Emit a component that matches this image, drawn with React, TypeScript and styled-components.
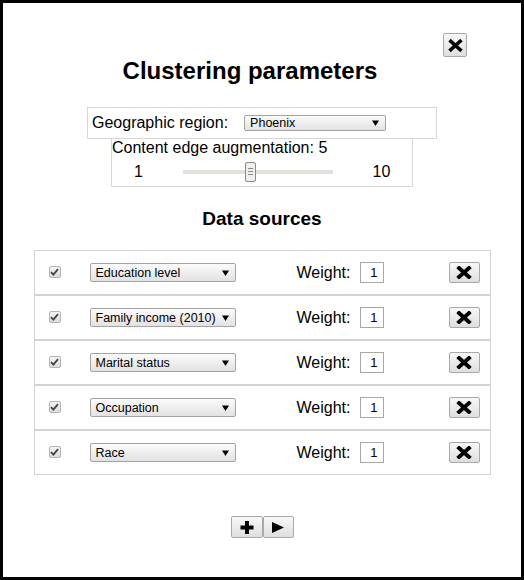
import React from 'react';
import styled, { createGlobalStyle } from 'styled-components';

const Global = createGlobalStyle`
  html, body { margin: 0; padding: 0; background: #fff; }
  body { font-family: "Liberation Sans", Arial, sans-serif; color: #000; }
  * { box-sizing: border-box; }
`;

const Frame = styled.div`
  width: 524px;
  height: 580px;
  border: 3px solid #000;
  background: #fff;
  display: flex;
  flex-direction: column;
  align-items: center;
`;

const TopBar = styled.div`
  align-self: stretch;
  display: flex;
  justify-content: flex-end;
  padding: 30px 54px 0 0;
`;

const IconButton = styled.button<{ $w: number; $h: number }>`
  width: ${(p) => p.$w}px;
  height: ${(p) => p.$h}px;
  padding: 0;
  margin: 0;
  display: flex;
  align-items: center;
  justify-content: center;
  border: 1px solid #a9a9a9;
  border-radius: 2px;
  background: linear-gradient(#f8f8f8, #dedede);
  cursor: pointer;
`;

const Title = styled.h1`
  margin: 0;
  align-self: stretch;
  padding-right: 24px;
  font-size: 24px;
  line-height: 28px;
  font-weight: bold;
  text-align: center;
`;

const RegionBox = styled.div`
  margin-top: 22px;
  width: 350px;
  height: 32px;
  border: 1px solid #d6d6d6;
  display: flex;
  align-items: center;
  padding-left: 4px;
  gap: 16px;
  font-size: 16px;
`;

const SliderBox = styled.div`
  width: 302px;
  height: 49px;
  margin-top: -1px;
  border: 1px solid #d6d6d6;
  display: flex;
  flex-direction: column;
  font-size: 16px;
`;

const SliderCaption = styled.div`
  line-height: 18px;
`;

const SliderRow = styled.div`
  flex: 1;
  display: grid;
  grid-template-columns: 53px 150px 1fr;
  column-gap: 18px;
  align-items: center;
`;

const SliderValue = styled.div`
  text-align: center;
  line-height: 18px;
`;

const Track = styled.div`
  position: relative;
  height: 4px;
  background: #e4e0dc;
  border-radius: 1px;
`;

const Thumb = styled.div`
  position: absolute;
  top: -8px;
  width: 11px;
  height: 20px;
  margin-left: -5px;
  border: 1px solid #8c8c8c;
  border-radius: 2px;
  background: #f1efec;
  display: flex;
  flex-direction: column;
  justify-content: center;
  align-items: center;
  gap: 2px;
`;

const Grip = styled.span`
  width: 5px;
  height: 1px;
  background: #8c8c8c;
`;

const Subtitle = styled.h2`
  margin: 21px 0 0;
  font-size: 19px;
  line-height: 22px;
  font-weight: bold;
  text-align: center;
`;

const Table = styled.div`
  margin-top: 20px;
  width: 457px;
  display: flex;
  flex-direction: column;
`;

const Row = styled.div`
  height: 45px;
  border: 1px solid #d3d3d3;
  display: grid;
  grid-template-columns: 55px 207px 63px 89px 1fr;
  align-items: center;
`;

const CheckCell = styled.div`
  padding-left: 14px;
  display: flex;
  align-items: center;
  margin-top: -2px;
`;

const CheckBox = styled.span`
  width: 12px;
  height: 12px;
  border: 1px solid #b4b4b4;
  border-radius: 2px;
  background: linear-gradient(#f4f4f4, #dcdcdc);
  display: flex;
  align-items: center;
  justify-content: center;
`;

const FakeSelect = styled.div<{ $w: number; $h: number }>`
  width: ${(p) => p.$w}px;
  height: ${(p) => p.$h}px;
  border: 1px solid #a3a3a3;
  border-radius: 2px;
  background: linear-gradient(#fbfbfb, #e2e2e2);
  display: flex;
  align-items: center;
  justify-content: space-between;
  padding: 0 6px 0 5px;
  font-size: 12.5px;
  white-space: nowrap;
`;

const WeightLabel = styled.span`
  font-size: 16px;
`;

const WeightInput = styled.div`
  width: 24px;
  height: 21px;
  border: 1px solid #a8a8a8;
  background: #fff;
  font-size: 13px;
  line-height: 19px;
  text-align: right;
  padding-right: 5px;
`;

const Footer = styled.div`
  margin-top: 41px;
  display: flex;
`;

const XIcon = ({ w = 16, h = 13 }: { w?: number; h?: number }) => (
  <svg width={w} height={h} viewBox="0 0 16 13">
    <path d="M3 2 L13 11 M13 2 L3 11" stroke="#000" strokeWidth="3.8" strokeLinecap="square" fill="none" />
  </svg>
);

const Arrow = () => (
  <svg width="7" height="6" viewBox="0 0 7 6">
    <polygon points="0,0.5 7,0.5 3.5,6" fill="#000" />
  </svg>
);

const Check = () => (
  <svg width="9" height="8" viewBox="0 0 9 8">
    <path d="M1 4.2 L3.4 6.6 L8 1.2" stroke="#444" strokeWidth="1.8" fill="none" />
  </svg>
);

const sources = ['Education level', 'Family income (2010)', 'Marital status', 'Occupation', 'Race'];

export default function App() {
  const value = 5;
  const pct = ((value - 1) / 9) * 100;
  return (
    <>
      <Global />
      <Frame>
        <TopBar>
          <IconButton $w={24} $h={24} aria-label="Close">
            <XIcon w={15} h={13} />
          </IconButton>
        </TopBar>
        <Title>Clustering parameters</Title>
        <RegionBox>
          <span>Geographic region:</span>
          <FakeSelect $w={142} $h={16}>
            <span>Phoenix</span>
            <Arrow />
          </FakeSelect>
        </RegionBox>
        <SliderBox>
          <SliderCaption>Content edge augmentation: {value}</SliderCaption>
          <SliderRow>
            <SliderValue>1</SliderValue>
            <Track>
              <Thumb style={{ left: `${pct}%` }}>
                <Grip />
                <Grip />
                <Grip />
              </Thumb>
            </Track>
            <SliderValue>10</SliderValue>
          </SliderRow>
        </SliderBox>
        <Subtitle>Data sources</Subtitle>
        <Table>
          {sources.map((s) => (
            <Row key={s}>
              <CheckCell>
                <CheckBox>
                  <Check />
                </CheckBox>
              </CheckCell>
              <div>
                <FakeSelect $w={146} $h={19}>
                  <span>{s}</span>
                  <Arrow />
                </FakeSelect>
              </div>
              <WeightLabel>Weight:</WeightLabel>
              <div>
                <WeightInput>1</WeightInput>
              </div>
              <div>
                <IconButton $w={31} $h={21} aria-label="Remove">
                  <XIcon />
                </IconButton>
              </div>
            </Row>
          ))}
        </Table>
        <Footer>
          <IconButton $w={32} $h={22} aria-label="Add">
            <svg width="16" height="15" viewBox="0 0 16 15">
              <path d="M8 1 V14 M1.5 7.5 H14.5" stroke="#000" strokeWidth="4" fill="none" />
            </svg>
          </IconButton>
          <IconButton $w={31} $h={22} aria-label="Run">
            <svg width="12" height="11" viewBox="0 0 12 11">
              <polygon points="0,0 12,5.5 0,11" fill="#000" />
            </svg>
          </IconButton>
        </Footer>
      </Frame>
    </>
  );
}
